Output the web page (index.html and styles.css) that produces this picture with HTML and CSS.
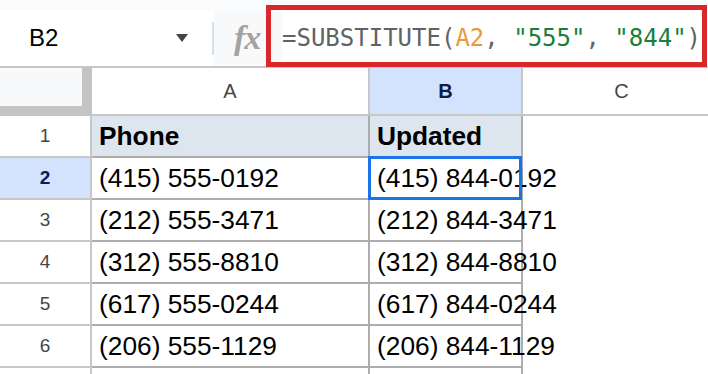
FILE: index.html
```html
<!DOCTYPE html>
<html>
<head>
<meta charset="utf-8">
<link rel="stylesheet" href="styles.css">
</head>
<body>
<div class="topstrip"></div>
<div class="fbar">
  <div class="namebox"><span>B2</span><span class="caret"></span></div>
  <div class="divider"></div>
  <div class="fx">fx</div>
  <div class="formula">=SUBSTITUTE(<span class="ref">A2</span>, <span class="str">"555"</span>, <span class="str">"844"</span>)</div>
  <div class="hl"></div>
</div>
<div class="sheet">
  <div class="c corner"></div>
  <div class="c ch">A</div>
  <div class="c ch sel">B</div>
  <div class="c ch last">C</div>

  <div class="c rh">1</div>
  <div class="c head">Phone</div>
  <div class="c head">Updated</div>
  <div class="c empty"></div>

  <div class="c rh selrow">2</div>
  <div class="c">(415) 555-0192</div>
  <div class="c active">(415) 844-0192</div>
  <div class="c empty"></div>

  <div class="c rh">3</div>
  <div class="c">(212) 555-3471</div>
  <div class="c">(212) 844-3471</div>
  <div class="c empty"></div>

  <div class="c rh">4</div>
  <div class="c">(312) 555-8810</div>
  <div class="c">(312) 844-8810</div>
  <div class="c empty"></div>

  <div class="c rh">5</div>
  <div class="c">(617) 555-0244</div>
  <div class="c">(617) 844-0244</div>
  <div class="c empty"></div>

  <div class="c rh">6</div>
  <div class="c">(206) 555-1129</div>
  <div class="c">(206) 844-1129</div>
  <div class="c empty"></div>

  <div class="c rh stub"></div>
  <div class="c stub"></div>
  <div class="c stub"></div>
  <div class="c empty"></div>
</div>
</body>
</html>
```
FILE: styles.css
```css
* { box-sizing: border-box; margin: 0; padding: 0; }
html, body { background: #fff; }
body {
  margin: 0;
  width: 708px;
  height: 374px;
  overflow: hidden;
  font-family: "Liberation Sans", Arial, sans-serif;
}
.topstrip { height: 10px; background: #f9fbfd; }
.fbar {
  position: relative;
  display: flex;
  height: 58px;
  border-bottom: 2px solid #c7c7c7;
  background: #fff;
}
.namebox {
  width: 212px;
  display: flex;
  align-items: center;
  justify-content: space-between;
  padding: 0 24px 0 29px;
  font-size: 24px;
  color: #000;
}
.caret {
  width: 0; height: 0;
  border-left: 6px solid transparent;
  border-right: 6px solid transparent;
  border-top: 8px solid #444;
}
.divider {
  width: 2px;
  height: 33px;
  align-self: center;
  background: #d3dff0;
}
.fx {
  width: 68px;
  background: #f8f9fa;
  padding-left: 20px;
  display: flex;
  align-items: center;
  font-family: "Liberation Serif", serif;
  font-style: italic;
  font-weight: bold;
  font-size: 34px;
  letter-spacing: -1px;
  color: #a3a3a3;
}
.formula {
  flex: 1;
  display: flex;
  align-items: center;
  white-space: pre;
  font-family: "DejaVu Sans Mono", monospace;
  font-size: 24px;
  color: #5f6368;
}
.formula .ref { color: #e69a3a; }
.formula .str { color: #188038; }
.hl {
  position: absolute;
  left: 266px;
  top: -5px;
  width: 441px;
  height: 62px;
  border: 5px solid #d9272b;
}
.sheet {
  display: grid;
  width: 720px;
  grid-template-columns: 92px 278px 153px 197px;
  grid-template-rows: 48px repeat(6, 42px) 6px;
}
.c {
  position: relative;
  min-width: 0;
  display: flex;
  align-items: center;
  white-space: nowrap;
  overflow: visible;
  padding-left: 7px;
  border-right: 2px solid #adadad;
  border-bottom: 2px solid #adadad;
  font-size: 26.3px;
  color: #000;
}
.stub { border-bottom: none; }
.rh {
  justify-content: center;
  padding: 0;
  font-size: 19px;
  color: #444746;
  border-color: #c7c7c7;
}
.ch {
  justify-content: center;
  padding: 0;
  font-size: 20px;
  color: #444746;
  border-color: #c7c7c7;
}
.ch.last { border-right: none; }
.corner {
  background: #f8f9fa;
  border-right: 10px solid #c4c4c4;
  border-bottom: 10px solid #c4c4c4;
}
.sel, .selrow {
  background: #d3e3fd;
  font-weight: bold;
  color: #0b1d4b;
}
.head {
  background: #dde5ee;
  font-weight: bold;
}
.empty { border: none; }
.active::after {
  content: "";
  position: absolute;
  left: -2px;
  top: -2px;
  right: -1px;
  bottom: -2px;
  border: 3px solid #1a73e8;
}
```
